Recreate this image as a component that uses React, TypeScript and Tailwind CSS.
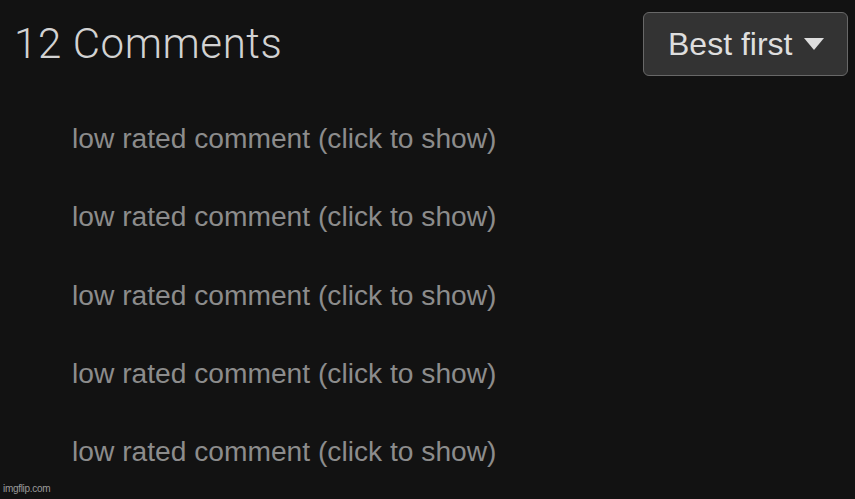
export default function App() {
  const rows = [0, 1, 2, 3, 4];
  return (
    <div className="relative w-[855px] h-[499px] overflow-hidden bg-[#121212]" style={{ fontFamily: '"Liberation Sans", Arial, sans-serif' }}>
      <div className="flex items-start justify-between">
        <h1
          className="ml-[14px] mt-[23px] text-[42px] leading-none font-light text-[#d2d2d2] tracking-[0.6px]"
          style={{ fontFamily: 'Roboto, "Liberation Sans", sans-serif' }}
        >
          12 Comments
        </h1>
        <button className="mt-[12px] mr-[7px] flex h-[64px] w-[205px] items-center rounded-[6px] border-[1.5px] border-[#686868] bg-[#333333] pl-[24px] text-[32px] leading-none text-[#dedede]">
          <span>Best first</span>
          <svg className="ml-[12px]" width="20" height="12" viewBox="0 0 20 12">
            <path d="M0 0 L20 0 L10 12 Z" fill="#dedede" />
          </svg>
        </button>
      </div>
      <div className="mt-[48px] flex flex-col gap-[50.3px] pl-[72px]">
        {rows.map((r) => (
          <div key={r} className="text-[28.2px] leading-[28px] text-[#8c8c8c] cursor-pointer">
            low rated comment (click to show)
          </div>
        ))}
      </div>
      <div className="absolute bottom-[5px] left-[3px] text-[10px] leading-none text-[#9a9a9a] tracking-[-0.3px]">
        imgflip.com
      </div>
    </div>
  );
}
